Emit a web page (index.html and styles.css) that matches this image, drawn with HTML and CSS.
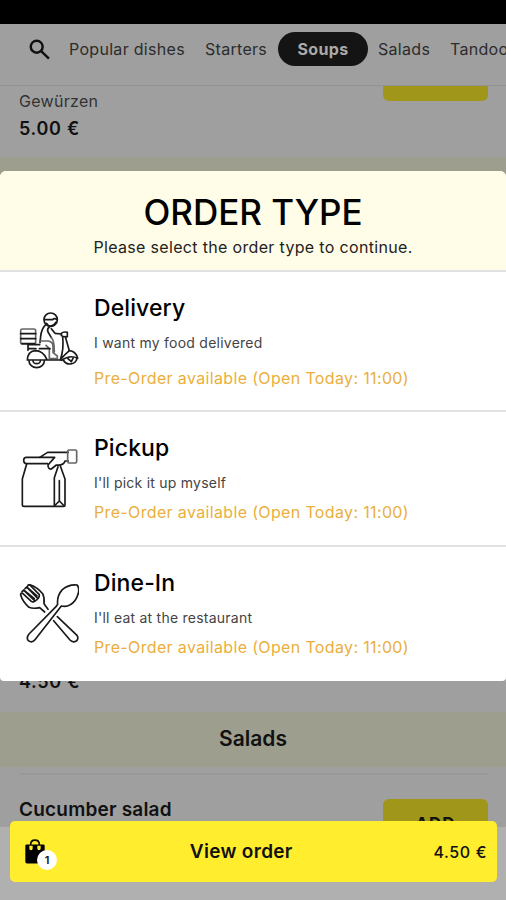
FILE: index.html
```
<!DOCTYPE html>
<html lang="en">

<head>
    <meta charset="UTF-8">
    <meta name="viewport" content="width=device-width, initial-scale=1.0">
    <title>Order type</title>
    <link rel="stylesheet" href="styles.css">
</head>

<body>
    <div class="app">
        <div class="status"></div>
        <!-- category nav -->
        <nav class="nav">
            <svg class="search" viewBox="0 0 60 60">
                <circle cx="22" cy="22" r="17" />
                <path d="M34 34 L57 56" />
            </svg>
            <a href="#" class="popular">Popular dishes</a>
            <a href="#" class="starters">Starters</a>
            <a href="#" class="current">Soups</a>
            <a href="#" class="salads">Salads</a>
            <a href="#" class="tandoori">Tandoori</a>
        </nav>
        <!-- menu behind the dialog -->
        <div class="menu">
            <div class="dish first">
                <div>
                    <p class="desc">Gewürzen</p>
                    <p class="price">5.00 €</p>
                </div>
                <div class="add-end"></div>
            </div>
            <div class="band soups"></div>
            <div class="dish second">
                <p class="price">4.50 €</p>
            </div>
            <h2 class="band">Salads</h2>
            <div class="dish third">
                <h3>Cucumber salad</h3>
                <a href="#" class="add">ADD</a>
            </div>
        </div>
        <!-- cart bar -->
        <div class="cart">
            <a href="#" class="view">
                <span class="bag">
                    <svg viewBox="0 0 60 74">
                        <path class="body" d="M5 16 H55 Q59 16 59 20 V68 Q59 73 54 73 H6 Q1 73 1 68 V20 Q1 16 5 16 Z" />
                        <path class="handle" d="M17 27 V16 Q17 3 30 3 Q43 3 43 16 V27" />
                        <path class="hole" d="M13 20 H23 V28 Q23 33 18 33 Q13 33 13 28 Z M37 20 H47 V28 Q47 33 42 33 Q37 33 37 28 Z" />
                    </svg>
                    <i class="count">1</i>
                </span>
                <span class="label">View order</span>
                <span class="total">4.50 €</span>
            </a>
        </div>
        <!-- order type dialog -->
        <div class="dialog">
            <div class="head">
                <h1>ORDER TYPE</h1>
                <p>Please select the order type to continue.</p>
            </div>
            <a href="#" class="option delivery">
                <svg class="icon" viewBox="57 62 180 180">
                    <path class="soft" d="M62 124 Q62 119 67 119 H102 Q107 119 107 124 V159 Q107 164 102 164 H67 Q62 164 62 159 Z" />
                    <path d="M62 133 H107 M62 148 H107 M66 163 H104" />
                    <circle cx="152" cy="91" r="20" />
                    <path d="M133 91 H158 Q163 85 171 91 M140 102 Q144 110 152 110 Q163 108 168 98" />
                    <path d="M137 106 Q124 120 122 141 L120 160 M148 113 Q140 119 144 128 L154 145 M154 118 L165 132 L184 134" />
                    <path class="soft" d="M120 155 H145 Q160 158 159 173 V190 L172 200 V208 H148 V178 L138 168 M154 145 Q163 152 163 188" />
                    <path d="M84 166 H119 M86 178 H108 M118 178 H150 M84 166 V183" />
                    <path d="M184 132 Q190 126 202 129 V142 Q191 144 184 139 Z M188 143 Q192 180 181 211 M196 142 L208 184 Q193 197 181 211" />
                    <path d="M82 212 Q83 187 105 184 Q130 184 141 211 M82 212 H184" />
                    <path d="M87 214 A23 21 0 0 0 133 214 M99 214 A11 9 0 0 0 121 214" />
                    <path d="M208 184 Q227 185 233 207 Q210 195 185 213 M190 212 A22 22 0 0 0 231 207 M203 207 L214 217 L220 205" />
                </svg>
                <div class="info">
                    <h2>Delivery</h2>
                    <p class="what">I want my food delivered</p>
                    <p class="open">Pre-Order available (Open Today: 11:00)</p>
                </div>
            </a>
            <a href="#" class="option pickup">
                <svg class="icon" viewBox="57 52 180 180">
                    <path d="M80 100 L67 145 V222 Q67 227 72 227 H191 Q195 227 195 222 V145 L181 106" />
                    <path d="M163 141 V225 M163 141 L174 108 M178 150 V212 M163 226 L178 211 L193 226" />
                    <path d="M119 80 H79 Q71 80 71 89 Q71 99 80 99 H143" />
                    <path d="M119 80 L143 65 H205 M119 80 H164 L144 103 Q144 117 154 115 L169 103 Q192 105 195 91 H205" />
                    <path class="soft" d="M207 58 H226 Q230 58 230 62 V92 Q230 97 226 97 H207 Q203 97 203 92 V62 Q203 58 207 58 Z" />
                </svg>
                <div class="info">
                    <h2>Pickup</h2>
                    <p class="what">I'll pick it up myself</p>
                    <p class="open">Pre-Order available (Open Today: 11:00)</p>
                </div>
            </a>
            <a href="#" class="option dine">
                <svg class="icon" viewBox="57 52 180 180">
                    <path d="M173 116 Q170 91 187 72 Q207 55 231 58 Q239 65 235 83 Q228 108 211 117 Q199 125 184 121 L105 222 Q96 233 85 225 Q78 216 87 205 L168 123 Z" />
                    <path d="M62 88 Q68 108 87 125 Q99 130 119 126 L134 139 M90 57 Q113 65 128 84 Q134 96 132 114 L144 131" />
                    <path d="M62 88 Q61 81 68 83 L94 107 Q100 111 104 105 M66 78 Q69 72 75 77 L103 104 M75 69 Q78 63 84 68 L111 96 M83 61 Q85 55 91 59 L118 87 Q119 98 104 107 M71 73 L103 99 M80 64 L111 91" />
                    <path d="M161 165 L210 223 Q218 232 229 226 Q237 219 231 209 L172 153" />
                </svg>
                <div class="info">
                    <h2>Dine-In</h2>
                    <p class="what">I'll eat at the restaurant</p>
                    <p class="open">Pre-Order available (Open Today: 11:00)</p>
                </div>
            </a>
        </div>
    </div>
</body>

</html>
```
FILE: styles.css
```
* {
    margin: 0;
    padding: 0;
    box-sizing: border-box;
}

body {
    font-family: Inter, "Liberation Sans", sans-serif;
    color: #111;
}

a {
    color: inherit;
    text-decoration: none;
}

.app {
    position: relative;
    display: flex;
    flex-direction: column;
    width: 506px;
    height: 900px;
    overflow: hidden;
    background-color: #9f9f9f;
}

.status {
    flex: none;
    height: 24px;
    background-color: #000;
}

.nav {
    flex: none;
    display: flex;
    align-items: center;
    height: 62px;
    padding: 0 0 11px 29px;
    border-bottom: 1px solid #939393;
    color: #2c2c2c;
    font-size: 16px;
    letter-spacing: .3px;
    white-space: nowrap;
    overflow: hidden;
}

.nav a {
    flex: none;
}

.search {
    flex: none;
    width: 21px;
    height: 21px;
    margin-right: 19px;
    fill: none;
    stroke: #111;
    stroke-width: 7;
}

.popular {
    width: 136px;
}

.starters {
    width: 73px;
}

.nav .current {
    width: 90px;
    height: 34px;
    margin-right: 10px;
    border-radius: 17px;
    background-color: #141414;
    color: #aaa;
    font-weight: 700;
    line-height: 34px;
    text-align: center;
}

.salads {
    width: 72px;
}

.menu {
    flex: 1;
    overflow: hidden;
}

.dish {
    display: flex;
    justify-content: space-between;
    padding: 0 18px 0 19px;
}

.first {
    height: 71px;
}

.desc {
    margin-top: 5px;
    color: #333;
    font-size: 16px;
    line-height: 20px;
    letter-spacing: .3px;
}

.price {
    font-size: 18px;
    font-weight: 600;
    line-height: 36px;
    letter-spacing: .7px;
}

.add-end {
    width: 105px;
    height: 15px;
    border-radius: 0 0 6px 6px;
    background-color: #a0961a;
}

.band {
    height: 55px;
    background-color: #9d9e8d;
    font-size: 21px;
    font-weight: 600;
    line-height: 54px;
    text-align: center;
}

.second {
    height: 500px;
    align-items: flex-end;
    padding-bottom: 12px;
}

.third {
    margin: 6px 18px 0 19px;
    padding: 0;
    border-top: 2px solid #999;
}

.third h3 {
    margin-top: 22px;
    font-size: 19px;
    font-weight: 600;
    line-height: 26px;
    letter-spacing: .2px;
}

.add {
    width: 105px;
    height: 50px;
    margin-top: 24px;
    border-radius: 6px;
    background-color: #a0961a;
    font-size: 17px;
    font-weight: 700;
    line-height: 50px;
    text-align: center;
    letter-spacing: 1px;
}

.cart {
    position: absolute;
    left: 0;
    bottom: 0;
    width: 506px;
    height: 73px;
    padding: 0 9px 0 10px;
    background-color: #b0b0b0;
}

.view {
    display: flex;
    align-items: center;
    height: 61px;
    margin-top: -6px;
    padding: 0 10px 0 15px;
    border-radius: 5px;
    background-color: #ffed2e;
}

.bag {
    position: relative;
    width: 20px;
    height: 25px;
}

.bag svg {
    display: block;
    width: 20px;
    height: 25px;
}

.handle {
    fill: none;
    stroke: #0c0c00;
    stroke-width: 5;
}

.hole {
    fill: #ffed2e;
}

.count {
    position: absolute;
    left: 12px;
    top: 11px;
    width: 20px;
    height: 20px;
    border-radius: 50%;
    background-color: #fff;
    font-size: 11px;
    font-style: normal;
    font-weight: 600;
    line-height: 20px;
    text-align: center;
}

.label {
    flex: 1;
    padding-left: 4px;
    font-size: 19px;
    font-weight: 600;
    text-align: center;
    letter-spacing: .3px;
}

.total {
    font-size: 16px;
    font-weight: 500;
    letter-spacing: .6px;
}

.dialog {
    position: absolute;
    left: 0;
    top: 171px;
    width: 506px;
    height: 510px;
    border-radius: 6px 6px 4px 4px;
    overflow: hidden;
    background-color: #fff;
    color: #000;
}

.head {
    height: 99px;
    padding-top: 20px;
    background-color: #fffde8;
    text-align: center;
}

.head h1 {
    font-size: 35px;
    font-weight: 500;
    line-height: 43px;
}

.head p {
    color: #222;
    font-size: 16px;
    line-height: 26px;
    letter-spacing: .33px;
}

.option {
    display: flex;
    align-items: center;
    height: 135px;
    padding-left: 19px;
    border-top: 2px solid #e0e1e3;
}

.delivery {
    height: 140px;
}

.icon {
    flex: none;
    width: 60px;
    height: 60px;
    margin: -2px 15px 0 0;
    fill: none;
    stroke: #1a1a1a;
    stroke-width: 5;
    stroke-linecap: round;
    stroke-linejoin: round;
}

.soft {
    stroke: #666;
}

.info {
    align-self: flex-start;
}

.info h2 {
    margin-top: 21px;
    font-size: 23px;
    font-weight: 500;
    line-height: 31px;
    letter-spacing: .1px;
}

.what {
    margin-top: 8px;
    color: #444;
    font-size: 14px;
    line-height: 22px;
    letter-spacing: .24px;
}

.open {
    margin-top: 7px;
    color: #eaaf3c;
    font-size: 16px;
    line-height: 22px;
    letter-spacing: .35px;
}

.delivery .open {
    margin-top: 13px;
}
```
